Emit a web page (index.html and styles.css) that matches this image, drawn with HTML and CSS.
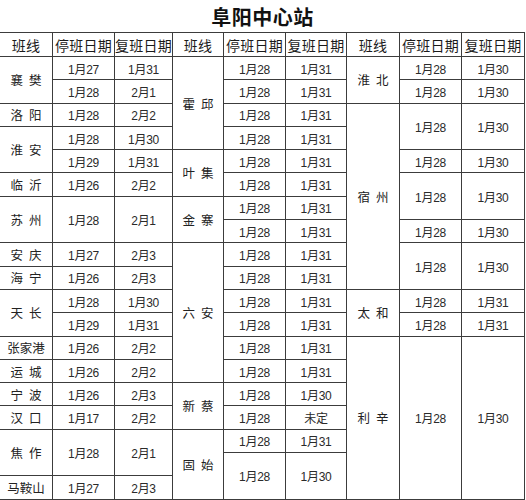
FILE: index.html
```html
<!DOCTYPE html>
<html lang="zh">
<head>
<meta charset="utf-8">
<title>阜阳中心站</title>
<link rel="stylesheet" href="styles.css">
</head>
<body>
<div class="page">
  <h1 class="title">阜阳中心站</h1>
  <div class="sheet">
    <div class="c h">班线</div><div class="c h">停班日期</div><div class="c h">复班日期</div>
    <div class="c h">班线</div><div class="c h">停班日期</div><div class="c h">复班日期</div>
    <div class="c h">班线</div><div class="c h">停班日期</div><div class="c h">复班日期</div>

    <!-- row 1 -->
    <div class="c n r2">襄 樊</div><div class="c d">1月27</div><div class="c d">1月31</div>
    <div class="c n r4">霍 邱</div><div class="c d">1月28</div><div class="c d">1月31</div>
    <div class="c n r2">淮 北</div><div class="c d">1月28</div><div class="c d">1月30</div>
    <!-- row 2 -->
    <div class="c d">1月28</div><div class="c d">2月1</div>
    <div class="c d">1月28</div><div class="c d">1月31</div>
    <div class="c d">1月28</div><div class="c d">1月30</div>
    <!-- row 3 -->
    <div class="c n">洛 阳</div><div class="c d">1月28</div><div class="c d">2月2</div>
    <div class="c d">1月28</div><div class="c d">1月31</div>
    <div class="c n r8">宿 州</div><div class="c d r2">1月28</div><div class="c d r2">1月30</div>
    <!-- row 4 -->
    <div class="c n r2">淮 安</div><div class="c d">1月28</div><div class="c d">1月30</div>
    <div class="c d">1月28</div><div class="c d">1月31</div>
    <!-- row 5 -->
    <div class="c d">1月29</div><div class="c d">1月31</div>
    <div class="c n r2">叶 集</div><div class="c d">1月28</div><div class="c d">1月31</div>
    <div class="c d">1月28</div><div class="c d">1月30</div>
    <!-- row 6 -->
    <div class="c n">临 沂</div><div class="c d">1月26</div><div class="c d">2月2</div>
    <div class="c d">1月28</div><div class="c d">1月31</div>
    <div class="c d r2">1月28</div><div class="c d r2">1月30</div>
    <!-- row 7 -->
    <div class="c n r2">苏 州</div><div class="c d r2">1月28</div><div class="c d r2">2月1</div>
    <div class="c n r2">金 寨</div><div class="c d">1月28</div><div class="c d">1月31</div>
    <!-- row 8 -->
    <div class="c d">1月28</div><div class="c d">1月31</div>
    <div class="c d">1月28</div><div class="c d">1月30</div>
    <!-- row 9 -->
    <div class="c n">安 庆</div><div class="c d">1月27</div><div class="c d">2月3</div>
    <div class="c n r6">六 安</div><div class="c d">1月28</div><div class="c d">1月31</div>
    <div class="c d r2">1月28</div><div class="c d r2">1月30</div>
    <!-- row 10 -->
    <div class="c n">海 宁</div><div class="c d">1月26</div><div class="c d">2月3</div>
    <div class="c d">1月28</div><div class="c d">1月31</div>
    <!-- row 11 -->
    <div class="c n r2">天 长</div><div class="c d">1月28</div><div class="c d">1月30</div>
    <div class="c d">1月28</div><div class="c d">1月31</div>
    <div class="c n r2">太 和</div><div class="c d">1月28</div><div class="c d">1月31</div>
    <!-- row 12 -->
    <div class="c d">1月29</div><div class="c d">1月31</div>
    <div class="c d">1月28</div><div class="c d">1月31</div>
    <div class="c d">1月28</div><div class="c d">1月31</div>
    <!-- row 13 -->
    <div class="c n">张家港</div><div class="c d">1月26</div><div class="c d">2月2</div>
    <div class="c d">1月28</div><div class="c d">1月31</div>
    <div class="c n r7">利 辛</div><div class="c d r7">1月28</div><div class="c d r7">1月30</div>
    <!-- row 14 -->
    <div class="c n">运 城</div><div class="c d">1月26</div><div class="c d">2月2</div>
    <div class="c d">1月28</div><div class="c d">1月31</div>
    <!-- row 15 -->
    <div class="c n">宁 波</div><div class="c d">1月26</div><div class="c d">2月3</div>
    <div class="c n r2">新 蔡</div><div class="c d">1月28</div><div class="c d">1月30</div>
    <!-- row 16 -->
    <div class="c n">汉 口</div><div class="c d">1月17</div><div class="c d">2月2</div>
    <div class="c d">1月28</div><div class="c d">未定</div>
    <!-- row 17 -->
    <div class="c n r2">焦 作</div><div class="c d r2">1月28</div><div class="c d r2">2月1</div>
    <div class="c n r3">固 始</div><div class="c d">1月28</div><div class="c d">1月31</div>
    <!-- row 18 -->
    <div class="c d r2">1月28</div><div class="c d r2">1月30</div>
    <!-- row 19 -->
    <div class="c n">马鞍山</div><div class="c d">1月27</div><div class="c d">2月3</div>
  </div>
</div>
</body>
</html>
```
FILE: styles.css
```css
html, body {
  margin: 0;
  padding: 0;
  background: #ffffff;
}

.page {
  width: 526px;
  font-family: "Noto Sans CJK SC", sans-serif;
  color: #1e1e1e;
}

.title {
  margin: 0;
  width: 525px;
  height: 32px;
  line-height: 34px;
  text-align: center;
  font-size: 20px;
  font-weight: bold;
  letter-spacing: 0.5px;
  color: #111;
}

.sheet {
  display: grid;
  width: 524px;
  grid-template-columns: 52px 61px 57px 50px 61px 60px 52px 61px 62px;
  grid-template-rows: 23px repeat(19, 22.3px);
  gap: 1px;
  background: #3c3c3c;
  border-top: 1px solid #3c3c3c;
  border-right: 1px solid #3c3c3c;
  border-bottom: 1px solid #3c3c3c;
}

.c {
  background: #ffffff;
  display: flex;
  align-items: center;
  justify-content: center;
  white-space: pre;
  overflow: hidden;
}

.h {
  font-size: 14px;
  letter-spacing: 0.3px;
  color: #1a1a1a;
}

.n {
  font-size: 12.5px;
  word-spacing: 3px;
  color: #222;
}

.d {
  font-family: "Liberation Sans", "Noto Sans CJK SC", sans-serif;
  font-size: 12px;
  letter-spacing: -0.3px;
  color: #2a2a2a;
}

.r2 { grid-row: span 2; }
.r3 { grid-row: span 3; }
.r4 { grid-row: span 4; }
.r6 { grid-row: span 6; }
.r7 { grid-row: span 7; }
.r8 { grid-row: span 8; }
```
